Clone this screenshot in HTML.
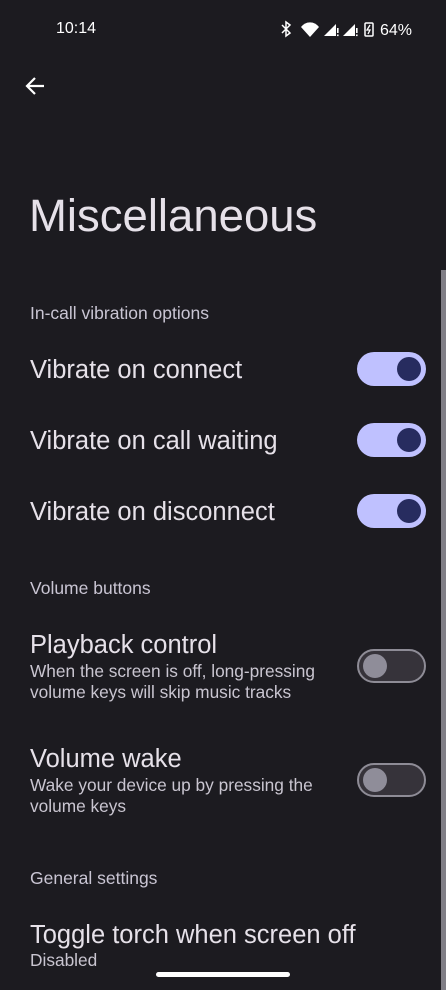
<!DOCTYPE html><html><head><style>
body{margin:0;width:446px;height:990px;background:#1c1b20;font-family:"Liberation Sans",sans-serif;color:#e6e1e9;position:relative;overflow:hidden}
.a{position:absolute;white-space:nowrap}
.h{font-size:17.5px;color:#c9c5d3;left:30px}
.t{font-size:25.5px;color:#e6e1e9;left:30px}
.s{font-size:17.3px;color:#c9c5d0;left:30px;line-height:21px}
.on{position:absolute;left:357px;width:69px;height:34px;border-radius:17px;background:#bfc1ff}
.on:after{content:"";position:absolute;right:5px;top:5px;width:24px;height:24px;border-radius:50%;background:#272c5f}
.off{position:absolute;left:357px;width:65px;height:30px;border-radius:17px;background:#36333a;border:2px solid #8e8c96}
.off:after{content:"";position:absolute;left:4px;top:3px;width:24px;height:24px;border-radius:50%;background:#8f8d99}
</style></head><body>
<div class="a" style="left:56px;top:20px;font-size:16px;color:#fff">10:14</div>
<div class="a" style="left:280px;top:19px;font-size:16px;color:#fff">
<svg width="100" height="20" style="vertical-align:-4px"><g fill="#fff" stroke="#fff"><path d="M2 6l8 8-4 3V3l4 3-8 8" fill="none" stroke-width="1.5"/><path d="M21 8a11 11 0 0 1 18 0l-9 10z" stroke="none"/><path d="M44 17l12-12v12z" stroke="none"/><rect x="57" y="9" width="1.6" height="5" stroke="none"/><rect x="57" y="15.5" width="1.6" height="1.6" stroke="none"/><path d="M63 17l12-12v12z" stroke="none"/><rect x="76" y="9" width="1.6" height="5" stroke="none"/><rect x="76" y="15.5" width="1.6" height="1.6" stroke="none"/><rect x="85" y="4" width="8" height="13" rx="1" fill="none" stroke-width="1.5"/><path d="M90 6l-3 5h3l-2 4" fill="none" stroke-width="1.3"/></g></svg>64%</div>
<svg class="a" style="left:24px;top:75px" width="22" height="22"><path d="M20 11H3M11 3l-8 8 8 8" fill="none" stroke="#fff" stroke-width="2.2"/></svg>
<div class="a" style="left:29px;top:190px;font-size:45.5px;color:#e6e1e9">Miscellaneous</div>
<div style="position:absolute;left:441px;top:270px;width:5px;height:720px;background:#807e86"></div>
<div class="a h" style="top:303px">In-call vibration options</div>
<div class="a t" style="top:356px">Vibrate on connect</div><div class="on" style="top:352px"></div>
<div class="a t" style="top:427px">Vibrate on call waiting</div><div class="on" style="top:423px"></div>
<div class="a t" style="top:498px">Vibrate on disconnect</div><div class="on" style="top:494px"></div>
<div class="a h" style="top:578px">Volume buttons</div>
<div class="a t" style="top:631px">Playback control</div>
<div class="a s" style="top:661px">When the screen is off, long-pressing<br>volume keys will skip music tracks</div>
<div class="off" style="top:649px"></div>
<div class="a t" style="top:745px">Volume wake</div>
<div class="a s" style="top:775px">Wake your device up by pressing the<br>volume keys</div>
<div class="off" style="top:763px"></div>
<div class="a h" style="top:868px">General settings</div>
<div class="a t" style="top:921px">Toggle torch when screen off</div>
<div class="a s" style="top:950px">Disabled</div>
<div style="position:absolute;left:156px;top:972px;width:134px;height:5px;border-radius:3px;background:#fff"></div>
</body></html>
